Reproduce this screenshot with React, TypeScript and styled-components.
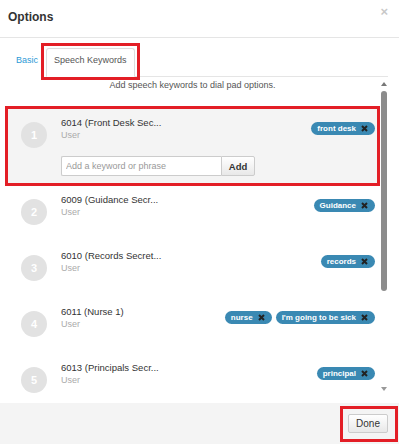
import styled, { createGlobalStyle } from 'styled-components'

const GlobalStyle = createGlobalStyle`
  html, body {
    margin: 0;
    padding: 0;
    background: #fff;
  }
  body {
    font-family: "Liberation Sans", Arial, sans-serif;
    color: #333;
  }
`

type Contact = {
  num: number
  name: string
  keywords: string[]
}

const contacts: Contact[] = [
  { num: 1, name: '6014 (Front Desk Sec...', keywords: ['front desk'] },
  { num: 2, name: '6009 (Guidance Secr...', keywords: ['Guidance'] },
  { num: 3, name: '6010 (Records Secret...', keywords: ['records'] },
  { num: 4, name: '6011 (Nurse 1)', keywords: ['nurse', "I'm going to be sick"] },
  { num: 5, name: '6013 (Principals Secr...', keywords: ['principal'] },
]

const RED = '#e31e26'

function RemoveIcon() {
  return (
    <svg width="7" height="7" viewBox="0 0 7 7">
      <path d="M1 1 L6 6 M6 1 L1 6" stroke="#222" strokeWidth="2" />
    </svg>
  )
}

export default function App() {
  let selected = 1
  return (
    <>
      <GlobalStyle />
      <Modal>
        <Header>
          <Title>Options</Title>
          <Close>×</Close>
        </Header>
        <Body>
          <TabNav>
            <Tab>Basic</Tab>
            <TabCallout>
              <Tab $active>Speech Keywords</Tab>
            </TabCallout>
          </TabNav>
          <Panel>
            <ListPane>
              <Intro>Add speech keywords to dial pad options.</Intro>
              {contacts.map(c => (
                <Item key={c.num} $selected={c.num === selected}>
                  <Badge>{c.num}</Badge>
                  <Details>
                    <TopRow>
                      <div>
                        <Name>{c.name}</Name>
                        <Role>User</Role>
                      </div>
                      <Tags>
                        {c.keywords.map(k => (
                          <Tag key={k}>
                            {k}
                            <RemoveIcon />
                          </Tag>
                        ))}
                      </Tags>
                    </TopRow>
                    {c.num === selected && (
                      <AddRow>
                        <KeywordInput placeholder="Add a keyword or phrase" />
                        <AddButton>Add</AddButton>
                      </AddRow>
                    )}
                  </Details>
                </Item>
              ))}
            </ListPane>
            <ScrollBar>
              <Arrow />
              <Track>
                <Thumb />
              </Track>
              <Arrow $down />
            </ScrollBar>
          </Panel>
        </Body>
        <Footer>
          <DoneCallout>
            <DoneButton>Done</DoneButton>
          </DoneCallout>
        </Footer>
      </Modal>
    </>
  )
}

const Modal = styled.div`
  width: 399px;
  height: 444px;
  display: flex;
  flex-direction: column;
  overflow: hidden;
  background: #fff;
`

const Header = styled.div`
  height: 37px;
  display: flex;
  justify-content: space-between;
  align-items: flex-start;
  padding: 0 11px 0 8px;
  border-bottom: 1px solid #e5e5e5;
  box-sizing: content-box;
`

const Title = styled.div`
  margin-top: 10px;
  font-size: 12px;
  line-height: 14px;
  font-weight: bold;
  color: #333;
`

const Close = styled.div`
  margin-top: 5px;
  font-size: 13px;
  line-height: 14px;
  font-weight: bold;
  color: #c8c8c8;
`

const Body = styled.div`
  flex: 1;
  min-height: 0;
  display: flex;
  flex-direction: column;
  padding: 0 11px 0 8px;
`

const TabNav = styled.div`
  display: flex;
  align-items: flex-end;
  padding-top: 10px;
  border-bottom: 1px solid #e5e5e5;
`

const TabCallout = styled.div`
  display: flex;
  margin: -5px -5px -4px;
  padding: 2px 2px 0;
  border: 3px solid ${RED};
  position: relative;
`

const Tab = styled.div<{ $active?: boolean }>`
  height: 29px;
  box-sizing: border-box;
  margin-bottom: ${p => (p.$active ? '0' : '-1px')};
  padding: 5px 7px 0;
  font-size: 9px;
  line-height: 12px;
  border: 1px solid ${p => (p.$active ? '#ddd' : 'transparent')};
  border-bottom-color: ${p => (p.$active ? '#fff' : 'transparent')};
  border-radius: 3px 3px 0 0;
  background: #fff;
  color: ${p => (p.$active ? '#555' : '#2d9ad6')};
`

const Panel = styled.div`
  flex: 1;
  min-height: 0;
  display: flex;
  margin-left: -3px;
`

const ListPane = styled.div`
  flex: 1;
  min-width: 0;
  overflow: hidden;
`

const Intro = styled.div`
  padding: 2px 0 15px;
  text-align: center;
  font-size: 9px;
  line-height: 12px;
  color: #555;
`

const Item = styled.div<{ $selected?: boolean }>`
  display: flex;
  align-items: flex-start;
  background: ${p => (p.$selected ? '#f4f4f4' : '#fff')};
  border: ${p => (p.$selected ? `3px solid ${RED}` : 'none')};
  padding: ${p => (p.$selected ? '8px 2px 7px 13px' : '8px 5px 17px 16px')};
`

const Badge = styled.div`
  flex-shrink: 0;
  width: 26px;
  height: 26px;
  margin-top: 5px;
  margin-right: 14px;
  border-radius: 50%;
  background: #e2e2e2;
  color: #fff;
  font-size: 11px;
  font-weight: bold;
  display: flex;
  align-items: center;
  justify-content: center;
`

const Details = styled.div`
  flex: 1;
  min-width: 0;
`

const TopRow = styled.div`
  display: flex;
  justify-content: space-between;
  align-items: flex-start;
`

const Name = styled.div`
  font-size: 9.5px;
  line-height: 12px;
  color: #333;
  white-space: nowrap;
`

const Role = styled.div`
  font-size: 9px;
  line-height: 12px;
  color: #aaa;
`

const Tags = styled.div`
  display: flex;
  gap: 4px;
  margin-top: 5px;
`

const Tag = styled.span`
  display: inline-flex;
  align-items: center;
  gap: 5px;
  height: 13px;
  padding: 0 7px 0 6px;
  border-radius: 7px;
  background: #3a89b3;
  color: #fff;
  font-size: 8px;
  font-weight: bold;
  white-space: nowrap;
`

const AddRow = styled.div`
  display: flex;
  margin-top: 15px;
  height: 20px;
`

const KeywordInput = styled.input`
  width: 160px;
  height: 20px;
  box-sizing: border-box;
  margin: 0;
  padding: 0 4px;
  border: 1px solid #ccc;
  border-right: none;
  border-radius: 2px 0 0 2px;
  background: #fff;
  font-family: inherit;
  font-size: 9px;
  color: #333;
  outline: none;

  &::placeholder {
    color: #999;
  }
`

const AddButton = styled.button`
  width: 34px;
  height: 20px;
  box-sizing: border-box;
  margin: 0;
  padding: 0;
  border: 1px solid #ccc;
  border-radius: 0 2px 2px 0;
  background: linear-gradient(#fff, #e8e8e8);
  font-family: inherit;
  font-size: 9.5px;
  font-weight: bold;
  color: #333;
`

const ScrollBar = styled.div`
  width: 8px;
  display: flex;
  flex-direction: column;
  align-items: center;
  padding: 5px 0 12px;
`

const Arrow = styled.div<{ $down?: boolean }>`
  width: 0;
  height: 0;
  border-left: 3px solid transparent;
  border-right: 3px solid transparent;
  ${p =>
    p.$down
      ? 'border-top: 4px solid #999;'
      : 'border-bottom: 4px solid #777;'}
`

const Track = styled.div`
  flex: 1;
  padding-top: 5px;
`

const Thumb = styled.div`
  width: 6px;
  height: 200px;
  border-radius: 3px;
  background: #8c8c8c;
`

const Footer = styled.div`
  height: 41px;
  flex-shrink: 0;
  display: flex;
  justify-content: flex-end;
  align-items: center;
  padding-right: 11px;
  background: #f4f4f4;
`

const DoneCallout = styled.div`
  display: flex;
  margin: -8px -10px -9px -8px;
  padding: 5px 7px 6px 5px;
  border: 3px solid ${RED};
`

const DoneButton = styled.button`
  width: 40px;
  height: 19px;
  box-sizing: border-box;
  margin: 0;
  padding: 0;
  border: 1px solid #ccc;
  border-radius: 2px;
  background: linear-gradient(#fff, #e8e8e8);
  font-family: inherit;
  font-size: 10px;
  color: #333;
`
